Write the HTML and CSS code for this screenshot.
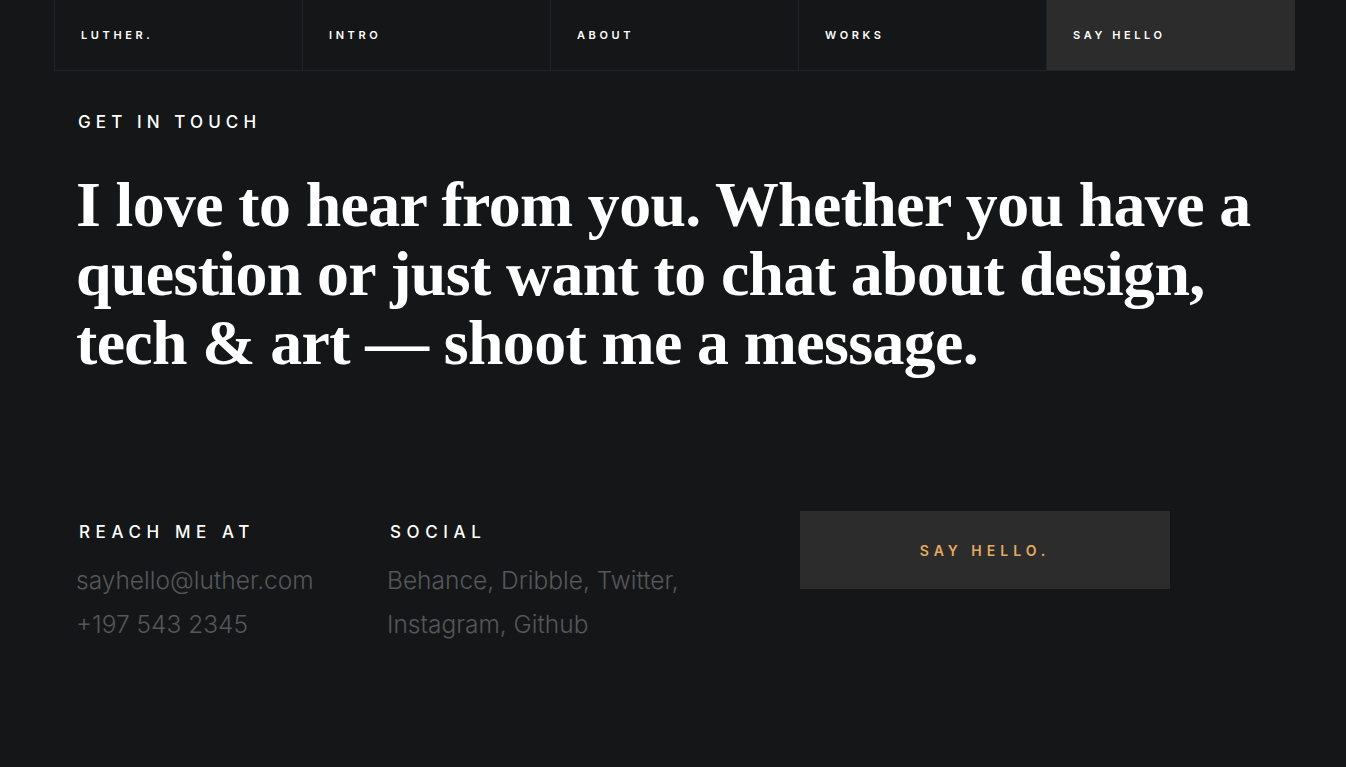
FILE: index.html
```html
<!DOCTYPE html>
<html lang="en">
<head>
<meta charset="utf-8">
<title>Luther — Say Hello</title>
<link rel="stylesheet" href="styles.css">
</head>
<body>
<div class="page">
  <nav class="nav">
    <a class="nav-item" href="#">LUTHER.</a>
    <a class="nav-item" href="#">INTRO</a>
    <a class="nav-item" href="#">ABOUT</a>
    <a class="nav-item" href="#">WORKS</a>
    <a class="nav-item active" href="#">SAY HELLO</a>
  </nav>
  <main class="contact">
    <p class="eyebrow">GET IN TOUCH</p>
    <h1 class="headline">I love to hear from you. Whether you have a question or just want to chat about design, tech &amp; art — shoot me a message.</h1>
    <div class="details">
      <div class="col col-reach">
        <h2 class="col-title">REACH ME AT</h2>
        <p class="col-text">sayhello@luther.com<br>+197 543 2345</p>
      </div>
      <div class="col col-social">
        <h2 class="col-title">SOCIAL</h2>
        <p class="col-text">Behance, Dribble, Twitter,<br>Instagram, Github</p>
      </div>
      <a class="cta" href="#">SAY HELLO.</a>
    </div>
  </main>
</div>
</body>
</html>
```

FILE: styles.css
```css
* { box-sizing: border-box; }
html, body {
  margin: 0;
  padding: 0;
  background: #151618;
  height: 100%;
}
body {
  font-family: "Inter", "Liberation Sans", sans-serif;
  color: #fff;
}
.page {
  width: 1241px;
  margin-left: 54px;
}
.nav {
  display: grid;
  grid-template-columns: repeat(5, 1fr);
  height: 71px;
  border-left: 1px solid #222326;
  border-bottom: 1px solid #222326;
}
.nav-item {
  display: flex;
  align-items: center;
  padding-left: 26px;
  border-right: 1px solid #222326;
  color: #fff;
  text-decoration: none;
  font-size: 11px;
  font-weight: 600;
  letter-spacing: 3.6px;
}
.nav-item.active {
  background: #2c2c2c;
  border-right-color: #2c2c2c;
}
.contact {
  padding: 40px 0 0 22px;
}
.eyebrow {
  margin: 0;
  font-size: 17px;
  font-weight: 500;
  letter-spacing: 5.1px;
  line-height: 22px;
  padding-left: 2px;
}
.headline {
  margin: 37px 0 0;
  font-family: "Liberation Serif", "DejaVu Serif", serif;
  font-weight: 700;
  font-size: 63.8px;
  line-height: 69px;
  letter-spacing: -0.6px;
  max-width: 1210px;
}
.details {
  display: flex;
  align-items: flex-start;
  margin-top: 145px;
}
.col-reach { width: 311px; }
.col-social { width: 412px; }
.col-title {
  margin: 0 0 0 3px;
  font-size: 17px;
  font-weight: 500;
  letter-spacing: 5.6px;
  line-height: 20px;
}
.col-text {
  margin: 16px 0 0;
  font-size: 24.5px;
  font-weight: 300;
  line-height: 44px;
  color: #55575a;
}
.cta {
  display: flex;
  align-items: center;
  justify-content: center;
  width: 370px;
  height: 78px;
  margin-top: -11px;
  margin-left: 1px;
  background: #2c2c2c;
  color: #e5a961;
  text-decoration: none;
  font-size: 14px;
  font-weight: 600;
  letter-spacing: 5px;
}
```
